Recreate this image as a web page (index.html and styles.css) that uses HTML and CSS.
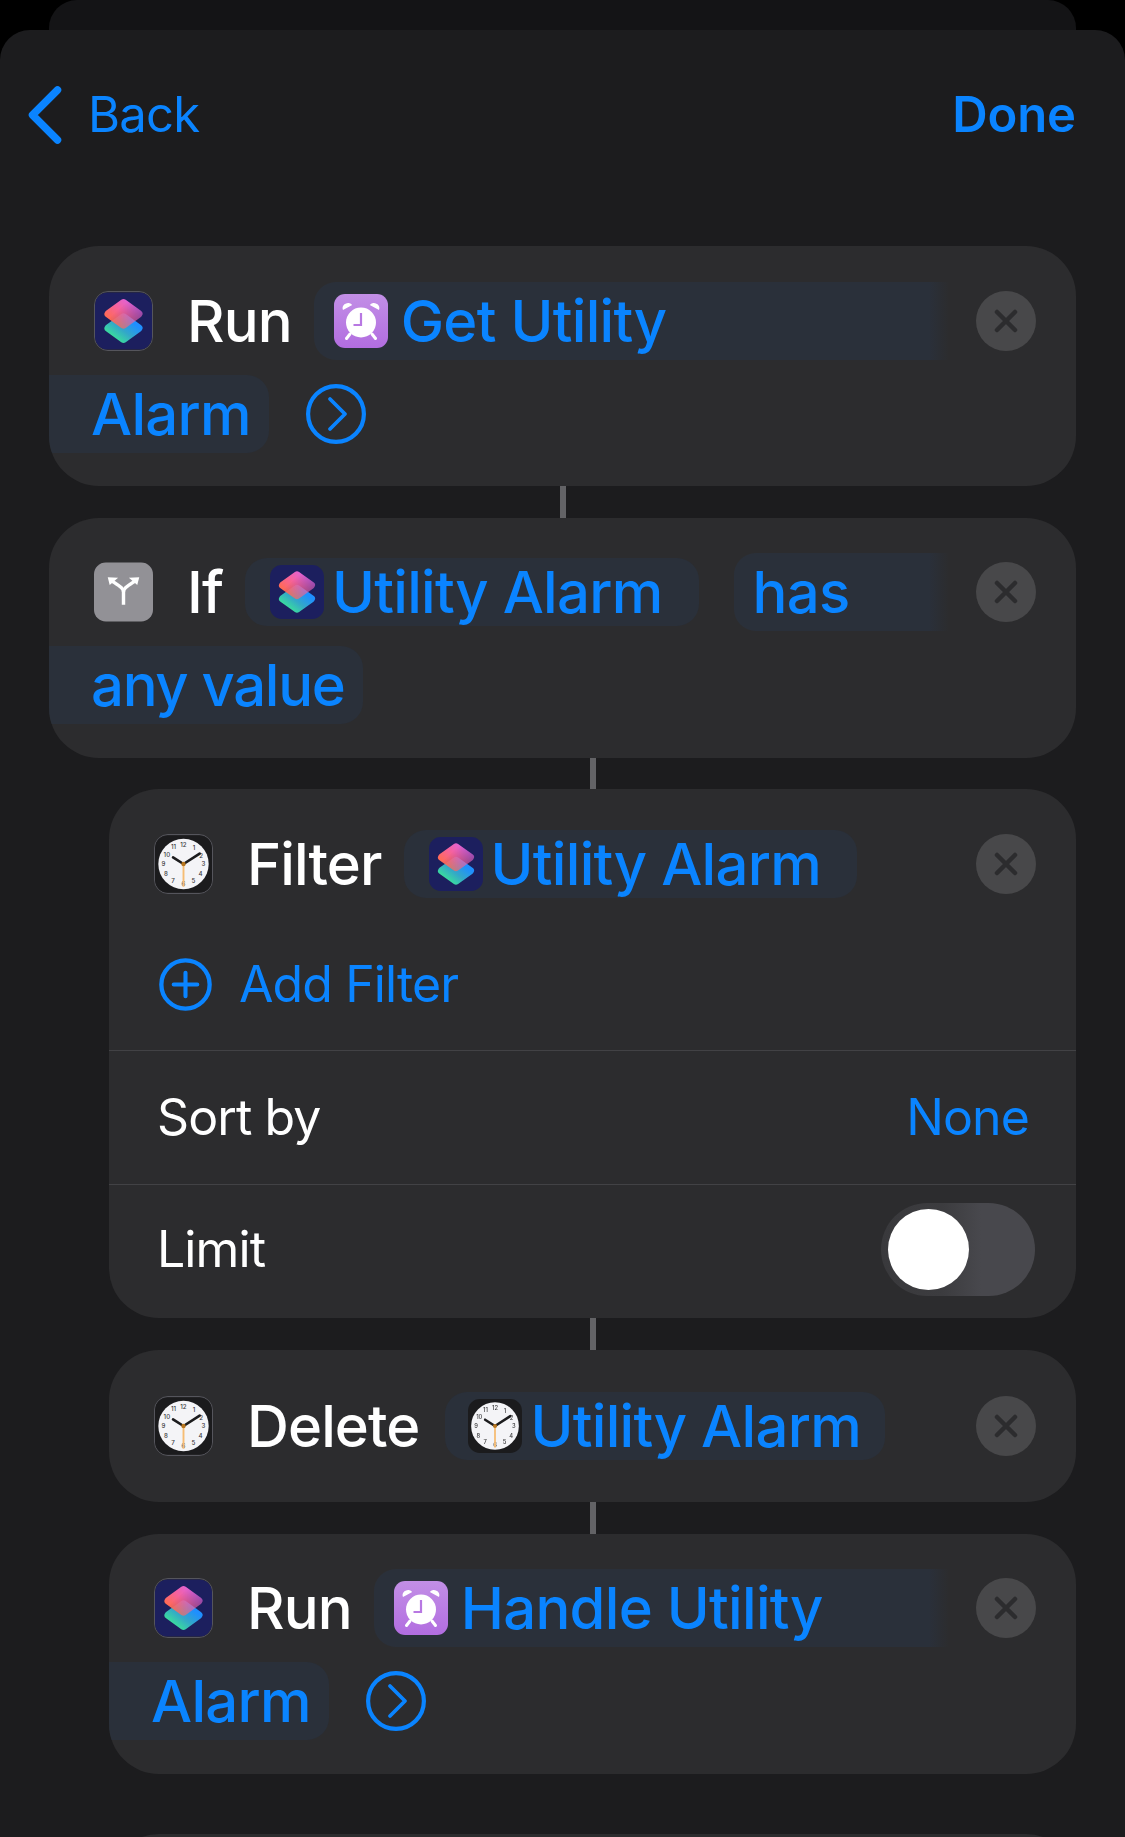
FILE: index.html
```html
<!DOCTYPE html>
<html lang="en">
<head>
<meta charset="utf-8">
<title>Shortcut editor</title>
<link rel="stylesheet" href="styles.css">
</head>
<body>
<svg class="sprite" aria-hidden="true">
  <defs>
    <linearGradient id="gTop" x1="0.05" y1="0.75" x2="0.85" y2="0.1">
      <stop offset="0" stop-color="#ff6a55"/>
      <stop offset="0.55" stop-color="#f562a0"/>
      <stop offset="1" stop-color="#e062d8"/>
    </linearGradient>
    <linearGradient id="gFade" x1="0.35" y1="0.35" x2="0.9" y2="0.95">
      <stop offset="0" stop-color="#fff" stop-opacity="1"/>
      <stop offset="1" stop-color="#fff" stop-opacity="0.15"/>
    </linearGradient>
    <mask id="mFade" maskUnits="userSpaceOnUse" x="0" y="0" width="60" height="60">
      <rect width="60" height="60" fill="url(#gFade)"/>
    </mask>
    <linearGradient id="gBot" x1="0.15" y1="0.95" x2="0.85" y2="0.3">
      <stop offset="0" stop-color="#3be09a"/>
      <stop offset="0.5" stop-color="#33a8c8"/>
      <stop offset="1" stop-color="#1f8fff"/>
    </linearGradient>
    <linearGradient id="gAlarm" x1="0" y1="0" x2="0" y2="1">
      <stop offset="0" stop-color="#c28fe6"/>
      <stop offset="1" stop-color="#b26de0"/>
    </linearGradient>
    <symbol id="i-shortcuts" viewBox="0 0 60 60">
      <rect width="60" height="60" rx="13" fill="#1c1f5e"/>
      <path d="M30 26 46 37.500 30 49 14 37.500Z" fill="url(#gBot)" stroke="url(#gBot)" stroke-width="8" stroke-linejoin="round"/>
      <path d="M30 11 46 22.500 30 34 14 22.500Z" fill="url(#gTop)" stroke="url(#gTop)" stroke-width="8" stroke-linejoin="round" mask="url(#mFade)"/>
    </symbol>
    <symbol id="i-alarm" viewBox="0 0 54 54">
      <rect width="54" height="54" rx="11" fill="url(#gAlarm)"/>
      <g fill="#fff">
        <path d="M9 16c-1.600-3.500 1.800-7.600 6.500-6.800 1.300.2 2 1 2.700 1.800z"/>
        <path d="M45 16c1.600-3.500-1.800-7.600-6.500-6.800-1.300.2-2 1-2.700 1.800z"/>
        <circle cx="27" cy="28.500" r="15"/>
      </g>
      <g stroke="#fff" stroke-width="3" stroke-linecap="round">
        <path d="M16 40 12.500 44.500"/>
        <path d="M38 40 41.500 44.500"/>
      </g>
      <path d="M27 19V31H19.500" fill="none" stroke="#b878e2" stroke-width="2.200"/>
    </symbol>
    <symbol id="i-fork" viewBox="0 0 60 60">
      <rect width="60" height="60" rx="12" fill="#929196"/>
      <g fill="none" stroke="#fff" stroke-width="3.500">
        <path d="M30 43V30C30 26 26 24 17 18"/>
        <path d="M30 30C30 26 34 24 43 18"/>
      </g>
      <path d="M14 15 24.500 15.500 16 23Z" fill="#fff"/>
      <path d="M46 15 35.500 15.500 44 23Z" fill="#fff"/>
    </symbol>
    <symbol id="i-clock" viewBox="0 0 60 60">
      <rect width="60" height="60" rx="13" fill="#1b1b1d"/>
      <circle cx="30" cy="30" r="26.500" fill="#f4f4f7"/>
      <g class="dial">
        <text x="30" y="12.500">12</text><text x="41" y="15.500">1</text><text x="48.500" y="23.500">2</text>
        <text x="51" y="32.500">3</text><text x="48" y="43">4</text><text x="40.500" y="50.500">5</text>
        <text x="30" y="53.500">6</text><text x="19" y="50.500">7</text><text x="11.500" y="43">8</text>
        <text x="9" y="32.500">9</text><text x="12.500" y="22.500">10</text><text x="19.500" y="14.500">11</text>
      </g>
      <path d="M30 30 47 19" stroke="#1c1c1e" stroke-width="2.800" stroke-linecap="round"/>
      <path d="M30 30 19 23" stroke="#1c1c1e" stroke-width="2.800" stroke-linecap="round"/>
      <path d="M30 30V54" stroke="#f6bd74" stroke-width="2"/>
      <circle cx="30" cy="30" r="2.300" fill="#b8761f"/>
    </symbol>
    <symbol id="i-close" viewBox="0 0 60 60">
      <circle cx="30" cy="30" r="30" fill="#48484a"/>
      <path d="M21 21 39 39M39 21 21 39" stroke="#2c2c2e" stroke-width="4.500" stroke-linecap="round"/>
    </symbol>
    <symbol id="i-go" viewBox="0 0 60 60">
      <circle cx="30" cy="30" r="27.900" fill="none" stroke="#0a84ff" stroke-width="4.200"/>
      <path d="M24 15 39 30 24 45" fill="none" stroke="#0a84ff" stroke-width="3.800" stroke-linecap="round" stroke-linejoin="round"/>
    </symbol>
  </defs>
</svg>

<div class="screen">
  <div class="peek"></div>
  <main class="sheet">
    <header class="nav">
      <div class="nav-back">
        <svg class="nav-chevron" viewBox="0 0 34 58"><path d="M29.500 4 4.500 29 29.500 54" fill="none" stroke="#0a84ff" stroke-width="7.500" stroke-linecap="round" stroke-linejoin="round"/></svg>
        <span class="nav-text">Back</span>
      </div>
      <span class="nav-text nav-done">Done</span>
    </header>

    <section class="flow">
      <article class="card card-first">
        <div class="row">
          <svg class="icon icon-framed"><use href="#i-shortcuts"/></svg>
          <span class="label">Run</span>
          <span class="pill pill-tall pill-fade pill-run">
            <svg class="icon-pill icon-pill-alarm"><use href="#i-alarm"/></svg>
            <span class="value">Get Utility</span>
          </span>
          <svg class="close"><use href="#i-close"/></svg>
        </div>
        <div class="row">
          <span class="pill pill-tall pill-wrap"><span class="value">Alarm</span></span>
          <svg class="go"><use href="#i-go"/></svg>
        </div>
      </article>

      <div class="connector"></div>

      <article class="card">
        <div class="row">
          <svg class="icon"><use href="#i-fork"/></svg>
          <span class="label">If</span>
          <span class="pill">
            <svg class="icon-pill"><use href="#i-shortcuts"/></svg>
            <span class="value">Utility Alarm</span>
          </span>
          <span class="pill pill-tall pill-fade pill-has"><span class="value">has</span></span>
          <svg class="close"><use href="#i-close"/></svg>
        </div>
        <div class="row">
          <span class="pill pill-tall pill-wrap"><span class="value value-tight">any value</span></span>
        </div>
      </article>

      <div class="connector connector-indent connector-short"></div>

      <article class="card card-indent card-filter">
        <div class="filter-top">
          <div class="row">
            <svg class="icon icon-framed"><use href="#i-clock"/></svg>
            <span class="label">Filter</span>
            <span class="pill">
              <svg class="icon-pill"><use href="#i-shortcuts"/></svg>
              <span class="value">Utility Alarm</span>
            </span>
            <svg class="close close-auto"><use href="#i-close"/></svg>
          </div>
          <div class="add-row">
            <svg class="add-icon" viewBox="0 0 54 54"><circle cx="27" cy="27" r="24.600" fill="none" stroke="#0a84ff" stroke-width="4.400"/><path d="M27 15V39M15 27H39" stroke="#0a84ff" stroke-width="4.200" stroke-linecap="round"/></svg>
            <span class="text-link">Add Filter</span>
          </div>
        </div>
        <div class="setting">
          <span class="text-plain">Sort by</span>
          <span class="text-link">None</span>
        </div>
        <div class="setting setting-limit">
          <span class="text-plain">Limit</span>
          <span class="toggle"><span class="knob"></span></span>
        </div>
      </article>

      <div class="connector connector-indent"></div>

      <article class="card card-indent card-single">
        <div class="row">
          <svg class="icon icon-framed"><use href="#i-clock"/></svg>
          <span class="label label-roomy">Delete</span>
          <span class="pill pill-snug">
            <svg class="icon-pill icon-soft"><use href="#i-clock"/></svg>
            <span class="value">Utility Alarm</span>
          </span>
          <svg class="close close-auto"><use href="#i-close"/></svg>
        </div>
      </article>

      <div class="connector connector-indent"></div>

      <article class="card card-indent">
        <div class="row">
          <svg class="icon icon-framed"><use href="#i-shortcuts"/></svg>
          <span class="label">Run</span>
          <span class="pill pill-tall pill-fade pill-run">
            <svg class="icon-pill icon-pill-alarm"><use href="#i-alarm"/></svg>
            <span class="value">Handle Utility</span>
          </span>
          <svg class="close"><use href="#i-close"/></svg>
        </div>
        <div class="row">
          <span class="pill pill-tall pill-wrap"><span class="value">Alarm</span></span>
          <svg class="go"><use href="#i-go"/></svg>
        </div>
      </article>

      <article class="card card-indent card-next"></article>
    </section>
  </main>
</div>
</body>
</html>
```

FILE: styles.css
```css
* { box-sizing: border-box; }

html, body {
  margin: 0;
  padding: 0;
  background: #000;
}

.sprite {
  display: block;
  width: 0;
  height: 0;
}

.screen {
  width: 1125px;
  height: 1837px;
  overflow: hidden;
  background: #000;
  font-family: Inter, "Liberation Sans", sans-serif;
  display: flex;
  flex-direction: column;
}

.peek {
  flex: none;
  height: 30px;
  margin: 0 49px;
  background: #141416;
  border-radius: 28px 28px 0 0;
}

.sheet {
  flex: 1;
  min-height: 0;
  overflow: hidden;
  background: #1c1c1e;
  border-radius: 30px 30px 0 0;
  padding: 56px 49px 0;
}

.nav {
  display: flex;
  align-items: center;
  justify-content: space-between;
  height: 58px;
  margin-left: -21px;
  margin-bottom: 102px;
}

.nav-back {
  display: flex;
  align-items: center;
  gap: 26px;
}

.nav-chevron {
  width: 34px;
  height: 58px;
  display: block;
}

.nav-text {
  font-size: 49px;
  font-weight: 400;
  color: #0a84ff;
  letter-spacing: -0.800px;
  line-height: 58px;
}

.nav-done {
  font-weight: 600;
  letter-spacing: -0.100px;
}

.flow {
  display: flex;
  flex-direction: column;
}

.card {
  flex: none;
  overflow: hidden;
  background: #2c2c2e;
  border-radius: 50px;
  padding: 35px 0 34px;
  display: flex;
  flex-direction: column;
  gap: 15px;
}

.card-first { padding: 36px 0 33px; }

.card-indent { margin-left: 60px; }

.card-single { padding: 42px 0; }

.card-filter {
  padding: 0;
  gap: 0;
}

.card-next {
  margin-top: 60px;
  height: 240px;
}

.connector {
  flex: none;
  align-self: center;
  width: 6px;
  height: 32px;
  background: #636366;
}

.connector-indent { margin-left: 60px; }

.connector-short { height: 31px; }

.row {
  display: flex;
  align-items: center;
  min-height: 68px;
  padding-left: 45px;
  padding-right: 40px;
}

.row:has(.pill-wrap) { padding-left: 0; }

.icon {
  flex: none;
  width: 59px;
  height: 60px;
  display: block;
}

.icon-framed {
  border: 1.5px solid #55555c;
  border-radius: 14px;
}

.label {
  flex: none;
  margin: 0 22px 0 34px;
  font-size: 58px;
  font-weight: 450;
  color: #fff;
  letter-spacing: -0.900px;
  line-height: 68px;
}

.label-roomy { margin-right: 26px; }

.pill {
  flex: none;
  display: flex;
  align-items: center;
  gap: 8px;
  height: 68px;
  padding: 0 36px 0 25px;
  background: #2a303a;
  border-radius: 22px;
}

.pill-snug { padding: 0 24px 0 23px; }

.pill-tall { height: 78px; }

.pill-fade {
  background: linear-gradient(to right, #2a303a calc(100% - 20px), rgba(42, 48, 58, 0));
  border-radius: 22px 0 0 22px;
}

.pill-run {
  flex: 1;
  gap: 13px;
  margin-right: 27px;
  padding-left: 20px;
}

.pill-has {
  flex: 1;
  margin: 0 27px 0 35px;
  padding-left: 19px;
}

.pill-wrap {
  border-radius: 0 22px 22px 0;
  padding: 0 18px 0 42px;
}

.icon-pill {
  flex: none;
  width: 54px;
  height: 54px;
  display: block;
}

.icon-pill-alarm {
  width: 54px;
  height: 54px;
}

.icon-soft { filter: blur(0.5px); }

.value {
  font-size: 58px;
  font-weight: 450;
  color: #0a84ff;
  letter-spacing: -0.700px;
  line-height: 68px;
  white-space: nowrap;
}

.value-tight { letter-spacing: -1.300px; }

.close {
  flex: none;
  width: 60px;
  height: 60px;
  display: block;
}

.close-auto { margin-left: auto; }

.go {
  flex: none;
  width: 60px;
  height: 60px;
  margin-left: 37px;
  display: block;
}

.dial text {
  font-family: Inter, "Liberation Sans", sans-serif;
  font-size: 6.500px;
  font-weight: 500;
  fill: #3a3a3c;
  text-anchor: middle;
}

.filter-top {
  padding: 41px 0 36px;
  display: flex;
  flex-direction: column;
  gap: 56px;
}

.add-row {
  display: flex;
  align-items: center;
  gap: 27px;
  height: 60px;
  padding-left: 50px;
}

.add-icon {
  flex: none;
  width: 53px;
  height: 53px;
  display: block;
}

.text-link,
.text-plain {
  font-size: 50px;
  font-weight: 400;
  letter-spacing: -0.900px;
  line-height: 60px;
}

.text-link { color: #0a84ff; }

.text-plain { color: #fff; }

.setting {
  flex: none;
  height: 134px;
  border-top: 1px solid #424245;
  display: flex;
  align-items: center;
  justify-content: space-between;
  padding: 0 47px 1px 48px;
}

.setting-limit { padding-bottom: 5px; }

.setting .toggle { margin-right: -6px; }

.toggle {
  width: 154px;
  height: 93px;
  padding: 6px 7px;
  border-radius: 47px;
  background: linear-gradient(to right, #39393c 0%, #3c3c3f 40%, #48484d 65%);
  display: flex;
  align-items: center;
}

.knob {
  width: 81px;
  height: 81px;
  border-radius: 50%;
  background: #fff;
}
```
